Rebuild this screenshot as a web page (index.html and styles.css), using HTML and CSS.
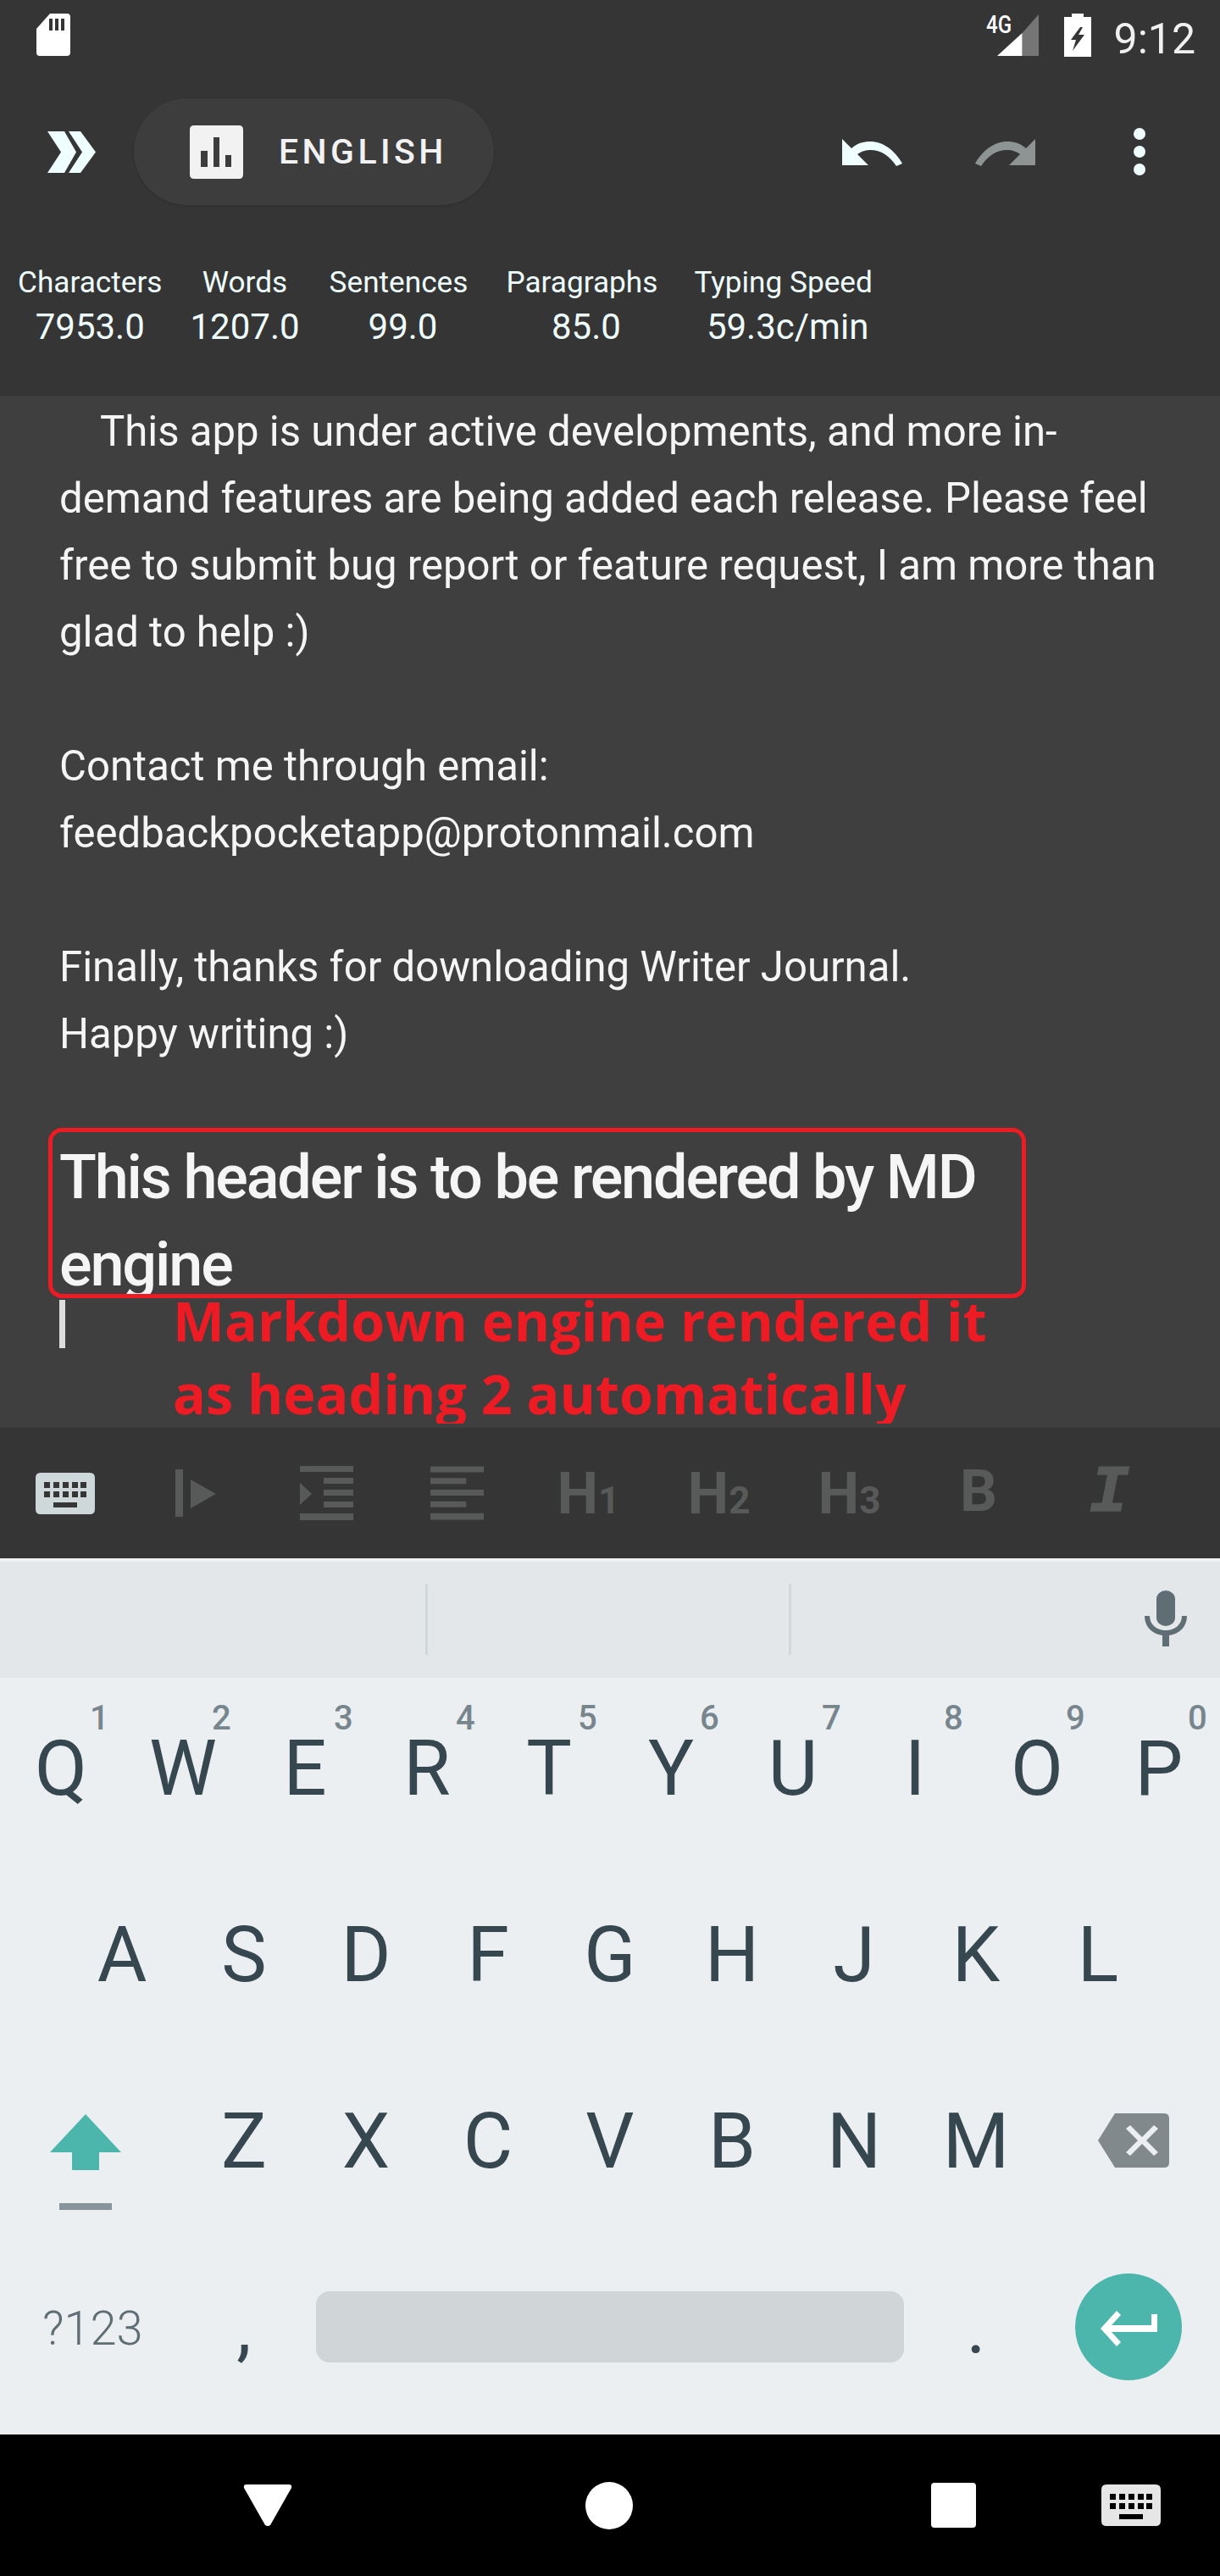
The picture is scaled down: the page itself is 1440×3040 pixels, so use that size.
FILE: index.html
```html
<!DOCTYPE html>
<html lang="en">
<head>
  <meta charset="UTF-8">
  <title>Writer Journal</title>
  <link rel="stylesheet" href="styles.css">
</head>
<body>
  <div class="screen">
    <header class="top">
      <div class="status">
        <svg class="sim" viewBox="0 0 40 50"><path fill-rule="evenodd" fill="#fff" d="M16 0H36Q40 0 40 4V46Q40 50 36 50H4Q0 50 0 46V18ZM15 6V20H19V6ZM22 6V20H26V6ZM29 6V20H33V6Z"/></svg>
        <div class="status-right">
          <div class="signal">
            <span class="net">4G</span>
            <svg viewBox="0 0 49 49"><path fill="#757575" d="M49 0V49H29.5V22Z"/><path fill="#fff" d="M29.5 22V49H0Z"/></svg>
          </div>
          <svg class="battery" viewBox="0 0 32 51"><path fill="#fff" d="M9 0H23V4H32V51H0V4H9Z"/><path fill="#353535" d="M19 16L8 31H14L10 44L24 25H17L22 16Z"/></svg>
          <span class="clock">9:12</span>
        </div>
      </div>

      <div class="appbar">
        <svg class="chevrons" viewBox="0 0 57 49"><path fill="#effefe" d="M0 0H20L34 24.5L20 49H0L16 24.5ZM25 0H39L57 24.5L39 49H25L41 24.5Z"/></svg>
        <div class="pill">
          <svg class="pill-icon" viewBox="0 0 63 63"><path fill-rule="evenodd" fill="#f2f2f2" d="M5 0H58Q63 0 63 5V58Q63 63 58 63H5Q0 63 0 58V5Q0 0 5 0ZM13 30V49H21V30ZM28 14V49H35V14ZM42 35V49H49V35Z"/></svg>
          <span class="pill-label">ENGLISH</span>
        </div>
        <div class="actions">
          <svg class="act-undo" viewBox="0 0 72 32"><path fill="#effefe" d="M0 0L11 11C18 5 25 3 33 3C48 3 62 13 71 29L64 32C56 20 46 13 33 13C27 13 22 15 18 18L31 31H0Z"/></svg>
          <svg class="act-redo" viewBox="0 0 72 32"><path fill="#8e9493" d="M72 0L61 11C54 5 47 3 39 3C24 3 10 13 1 29L8 32C16 20 26 13 39 13C45 13 50 15 54 18L41 31H72Z"/></svg>
          <svg class="act-more" viewBox="0 0 14 56"><circle fill="#effefe" cx="7" cy="7" r="7"/><circle fill="#effefe" cx="7" cy="28" r="7"/><circle fill="#effefe" cx="7" cy="49" r="7"/></svg>
        </div>
      </div>

      <div class="stats">
        <div class="stat"><span class="stat-name">Characters</span><span class="stat-val">7953.0</span></div>
        <div class="stat"><span class="stat-name">Words</span><span class="stat-val">1207.0</span></div>
        <div class="stat"><span class="stat-name">Sentences</span><span class="stat-val nudged">99.0</span></div>
        <div class="stat wide"><span class="stat-name">Paragraphs</span><span class="stat-val nudged">85.0</span></div>
        <div class="stat speed"><span class="stat-name">Typing Speed</span><span class="stat-val nudged">59.3c/min</span></div>
      </div>
    </header>

    <main class="editor">
      <p class="para first">This app is under active developments, and more in-<br>demand features are being added each release. Please feel<br>free to submit bug report or feature request, I am more than<br>glad to help :)</p>
      <p class="para">Contact me through email:<br>feedbackpocketapp@protonmail.com</p>
      <p class="para">Finally, thanks for downloading Writer Journal.<br>Happy writing :)</p>
      <h2 class="md-head">This header is to be rendered by MD<br>engine</h2>
      <div class="cursor"></div>
      <div class="note-box"></div>
      <div class="note">Markdown engine rendered it<br>as heading 2 automatically</div>
    </main>

    <div class="tools">
      <div class="tool"><svg class="kbd" viewBox="0 0 70 49"><use href="#kbd-shape" fill="#ced7da"/></svg></div>
      <div class="tool">
        <svg class="ic-play" viewBox="0 0 48 56"><path fill="#575a59" d="M0 0H9V56H0ZM18 12L48 29L18 46Z"/></svg>
      </div>
      <div class="tool">
        <svg class="ic-lines" viewBox="0 0 63 64"><path fill="#575a59" d="M0 0H63V7H0ZM28 14H63V21H28ZM28 28H63V35H28ZM28 42H63V49H28ZM0 56H63V64H0ZM0 20L14 33L0 46Z"/></svg>
      </div>
      <div class="tool">
        <svg class="ic-lines" viewBox="0 0 64 64"><path fill="#575a59" d="M0 0H64V7H0ZM0 14H43V21H0ZM0 28H64V35H0ZM0 42H43V49H0ZM0 56H64V64H0Z"/></svg>
      </div>
      <div class="tool tool-text tool-h">H<small>1</small></div>
      <div class="tool tool-text tool-h">H<small>2</small></div>
      <div class="tool tool-text tool-h">H<small>3</small></div>
      <div class="tool tool-text tool-b">B</div>
      <div class="tool tool-text tool-i">I</div>
    </div>

    <section class="keyboard">
      <div class="suggest">
        <span class="slot"></span>
        <span class="slot"></span>
        <span class="slot mic-slot">
          <svg class="mic" viewBox="0 0 50 66"><path fill="#5f6d75" d="M14 10A11 10 0 0 1 36 10V32A11 10 0 0 1 14 32ZM0 30H6C6 40 14 47 25 47S44 40 44 30H50C50 43 41 51 29 53V66H21V53C9 51 0 43 0 30Z"/></svg>
        </span>
      </div>

      <div class="keys">
        <div class="row">
          <div class="key">Q<sup>1</sup></div>
          <div class="key">W<sup>2</sup></div>
          <div class="key">E<sup>3</sup></div>
          <div class="key">R<sup>4</sup></div>
          <div class="key">T<sup>5</sup></div>
          <div class="key">Y<sup>6</sup></div>
          <div class="key">U<sup>7</sup></div>
          <div class="key">I<sup>8</sup></div>
          <div class="key">O<sup>9</sup></div>
          <div class="key">P<sup>0</sup></div>
        </div>
        <div class="row">
          <div class="key">A</div>
          <div class="key">S</div>
          <div class="key">D</div>
          <div class="key">F</div>
          <div class="key">G</div>
          <div class="key">H</div>
          <div class="key">J</div>
          <div class="key">K</div>
          <div class="key">L</div>
        </div>
        <div class="row">
          <div class="key key-side">
            <svg class="shift" viewBox="0 0 84 66"><path fill="#4db6ac" d="M42 0L84 45H58V66H26V45H0Z"/></svg>
            <span class="shift-bar"></span>
          </div>
          <div class="key">Z</div>
          <div class="key">X</div>
          <div class="key">C</div>
          <div class="key">V</div>
          <div class="key">B</div>
          <div class="key">N</div>
          <div class="key">M</div>
          <div class="key key-side">
            <svg class="del" viewBox="0 0 84 64"><path fill-rule="evenodd" fill="#81898d" d="M20 0H78Q84 0 84 6V58Q84 64 78 64H20L0 32ZM33 18L47 32L33 46L38 50L52 36L66 50L71 46L57 32L71 18L66 14L52 28L38 14Z"/></svg>
          </div>
        </div>
        <div class="row row-last">
          <div class="key-sym">?123</div>
          <div class="key-punct">,</div>
          <div class="space"></div>
          <div class="key-punct">.</div>
          <div class="key-enter">
            <div class="enter">
              <svg viewBox="0 0 67 42"><path fill="#fff" d="M60 4H67V25H13L24 37L19 42L0 21L19 0L24 5L13 17H60Z"/></svg>
            </div>
          </div>
        </div>
      </div>
    </section>

    <nav class="navbar">
      <svg class="nav-back" viewBox="0 0 58 50"><path fill="#fff" d="M4 0H54Q58 0 57 4L32 48Q29 50 26 48L1 4Q0 0 4 0Z"/></svg>
      <span class="nav-home"></span>
      <span class="nav-recent"></span>
      <svg class="kbd nav-kbd" viewBox="0 0 70 49"><use href="#kbd-shape" fill="#e6e6e6"/></svg>
    </nav>
  </div>

  <svg class="defs" width="0" height="0">
    <defs>
      <path id="kbd-shape" fill-rule="evenodd" d="M6 0H64Q70 0 70 6V43Q70 49 64 49H6Q0 49 0 43V6Q0 0 6 0ZM10 11V18H17V11ZM21 11V18H28V11ZM32 11V18H39V11ZM43 11V18H50V11ZM53 11V18H60V11ZM10 22V29H17V22ZM21 22V29H28V22ZM32 22V29H39V22ZM43 22V29H50V22ZM53 22V29H60V22ZM21 35V41H49V35Z"/>
    </defs>
  </svg>
</body>
</html>
```

FILE: styles.css
```css
* {
  box-sizing: border-box;
}
body {
  margin: 0;
  font-family: Roboto, "Liberation Sans", sans-serif;
  background: #353535;
}
.screen {
  width: 1440px;
  height: 3040px;
  overflow: hidden;
  display: flex;
  flex-direction: column;
}
.defs {
  position: absolute;
}

/* top area */
.top {
  height: 467px;
  background: #353535;
  flex: none;
}
.status {
  height: 84px;
  padding: 16px 29px 0 43px;
  display: flex;
  justify-content: space-between;
  align-items: flex-start;
}
.sim {
  width: 40px;
  height: 50px;
}
.status-right {
  display: flex;
  align-items: flex-start;
}
.signal {
  display: flex;
  align-items: flex-start;
  width: 62px;
  height: 50px;
  position: relative;
  justify-content: flex-end;
  margin-top: 1px;
}
.signal svg {
  width: 49px;
  height: 49px;
}
.net {
  position: absolute;
  left: 0;
  top: -5px;
  font-size: 29px;
  line-height: 34px;
  font-weight: 500;
  color: #fff;
  transform: scaleX(0.83);
  transform-origin: left;
}
.battery {
  width: 32px;
  height: 51px;
  margin-left: 30px;
}
.clock {
  font-size: 50px;
  line-height: 56px;
  color: #f0f0f0;
  margin-left: 27px;
  margin-top: 2px;
}
.appbar {
  height: 190px;
  display: flex;
  align-items: center;
  padding-left: 56px;
}
.chevrons {
  width: 57px;
  height: 49px;
}
.pill {
  width: 425px;
  height: 126px;
  margin-left: 45px;
  border-radius: 63px;
  background: #3d3d3d;
  box-shadow: 0 1px 3px rgba(0, 0, 0, 0.15);
  display: flex;
  align-items: center;
  padding-left: 66px;
}
.pill-icon {
  width: 63px;
  height: 63px;
}
.pill-label {
  margin-left: 42px;
  font-size: 41px;
  font-weight: 500;
  letter-spacing: 4.4px;
  color: #f2f2f2;
}
.actions {
  margin-left: 411px;
  display: flex;
  align-items: center;
}
.act-undo,
.act-redo {
  width: 72px;
  height: 32px;
  margin-top: 1px;
}
.act-redo {
  margin-left: 84px;
}
.act-more {
  width: 14px;
  height: 56px;
  margin-left: 116px;
}
.stats {
  padding: 32px 0 0 21px;
  display: flex;
  gap: 35px;
}
.stat {
  display: flex;
  flex-direction: column;
  align-items: center;
  color: #eefcfc;
}
.stat:first-child {
  margin-right: -2px;
}
.stat.wide {
  margin-left: 10px;
}
.stat.speed {
  margin-left: 8px;
}
.stat-name {
  font-size: 35.2px;
  line-height: 55px;
  white-space: nowrap;
}
.stat-val {
  font-size: 42px;
  line-height: 50px;
  white-space: nowrap;
}
.stat-val.nudged {
  margin-left: 10px;
}

/* editor */
.editor {
  position: relative;
  height: 1218px;
  flex: none;
  padding: 3px 0 0 70px;
  background: #3f3f3f;
  overflow: hidden;
  color: #f5f5f5;
}
.para {
  margin: 0 0 79px;
  font-size: 49.1px;
  line-height: 79px;
  white-space: nowrap;
}
.para.first {
  text-indent: 48px;
}
.md-head {
  height: 189px;
  margin: -1px 0 0;
  overflow: hidden;
  font-size: 72px;
  font-weight: 500;
  letter-spacing: -2.15px;
  line-height: 103px;
  white-space: nowrap;
}
.cursor {
  width: 7px;
  height: 57px;
  margin-top: 7px;
  background: #dddddd;
}
.note-box {
  position: absolute;
  left: 57px;
  top: 864px;
  width: 1154px;
  height: 201px;
  border: 5px solid #ed1c24;
  border-radius: 16px;
}
.note {
  position: absolute;
  left: 204px;
  top: 1048px;
  height: 165px;
  overflow: hidden;
  font-family: "Open Sans", sans-serif;
  font-weight: 700;
  font-size: 64.6px;
  line-height: 86px;
  white-space: nowrap;
  color: #ed1c24;
}

/* format toolbar */
.tools {
  height: 154px;
  flex: none;
  background: #353535;
  display: flex;
}
.tool {
  width: 154px;
  flex: none;
  display: flex;
  align-items: center;
  justify-content: center;
}
.kbd {
  width: 70px;
  height: 49px;
}
.ic-play {
  width: 48px;
  height: 56px;
}
.ic-lines {
  width: 63px;
  height: 64px;
}
.tool-text {
  font-size: 69px;
  font-weight: 700;
  color: #575a59;
  line-height: 1;
  align-items: baseline;
  padding-top: 43px;
}
.tool-h {
  padding-left: 2px;
}
.tool-text small {
  font-size: 44px;
  letter-spacing: -1px;
}
.tool-b {
  padding-top: 40px;
}
.tool-i {
  font-family: "Liberation Mono", monospace;
  font-style: italic;
  font-size: 78px;
  padding-top: 38px;
  -webkit-text-stroke: 1.5px #575a59;
}

/* keyboard */
.keyboard {
  height: 1034px;
  flex: none;
  background: #ebeff2;
}
.suggest {
  height: 141px;
  background: #e3e7ea;
  border-top: 4px solid #eef1f3;
  display: flex;
  align-items: center;
}
.slot {
  flex: none;
  width: 429px;
  height: 84px;
  border-right: 3px solid #d2d7da;
  margin-top: -2px;
}
.slot:first-child {
  width: 505px;
}
.mic-slot {
  border: 0;
  width: 506px;
  display: flex;
  justify-content: flex-end;
  padding: 8px 39px 0 0;
}
.mic {
  width: 50px;
  height: 66px;
}
.keys {
  margin-top: -4px;
}
.row {
  height: 220px;
  display: flex;
  justify-content: center;
}
.key {
  position: relative;
  width: 144px;
  display: flex;
  align-items: center;
  justify-content: center;
  padding-top: 3px;
  font-size: 90px;
  color: #37474f;
}
.key sup {
  position: absolute;
  left: 106px;
  top: 32px;
  font-size: 40px;
  font-weight: 500;
  line-height: 40px;
  color: #77858c;
  vertical-align: baseline;
}
.key-side {
  width: 216px;
  flex-direction: column;
  padding-top: 0;
}
.shift {
  width: 84px;
  height: 66px;
  margin: 50px 14px 0 0;
}
.shift-bar {
  width: 62px;
  height: 8px;
  margin: 39px 14px 0 0;
  background: #87949c;
}
.del {
  width: 84px;
  height: 64px;
  margin-left: 12px;
}
.row-last {
  justify-content: flex-start;
  align-items: center;
}
.key-sym {
  width: 216px;
  padding: 3px 0 0 50px;
  font-size: 56px;
  font-weight: 300;
  color: #5f6d75;
}
.key-punct {
  width: 144px;
  flex: none;
  text-align: center;
  font-size: 88px;
  line-height: 100px;
  color: #37474f;
}
.space {
  width: 695px;
  height: 84px;
  margin-left: 13px;
  margin-right: 13px;
  border-radius: 16px;
  background: #d0d5d8;
}
.key-enter {
  width: 216px;
  display: flex;
  justify-content: center;
}
.enter {
  width: 126px;
  height: 126px;
  border-radius: 50%;
  background: #4db6ac;
  display: flex;
  align-items: center;
  justify-content: center;
  padding-top: 4px;
}
.enter svg {
  width: 67px;
  height: 42px;
}

/* android nav */
.navbar {
  flex: 1;
  background: #000;
  display: flex;
  align-items: center;
  padding-left: 287px;
}
.nav-back {
  width: 58px;
  height: 50px;
}
.nav-home {
  width: 56px;
  height: 56px;
  margin-left: 346px;
  border-radius: 50%;
  background: #fff;
}
.nav-recent {
  width: 53px;
  height: 53px;
  margin-left: 352px;
  border-radius: 4px;
  background: #fff;
}
.nav-kbd {
  margin-left: 148px;
}
```
